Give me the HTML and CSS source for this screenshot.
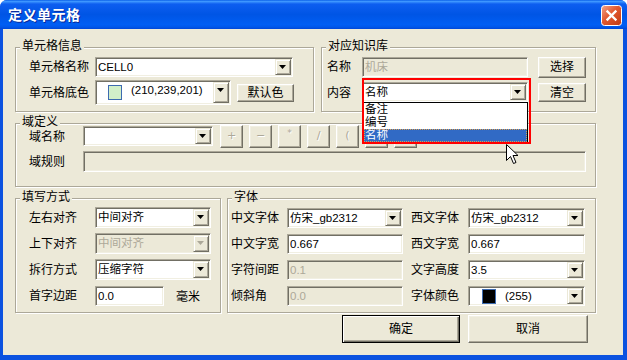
FILE: index.html
```html
<!DOCTYPE html>
<html lang="zh-CN">
<head>
<meta charset="utf-8">
<title>定义单元格</title>
<link rel="stylesheet" href="styles.css">
</head>
<body>
<div class="window">
  <div class="titlebar">
    <span class="title">定义单元格</span>
    <span class="close">
      <svg width="21" height="21" viewBox="0 0 21 21">
        <defs>
          <linearGradient id="closeGrad" x1="0" y1="0" x2="1" y2="1">
            <stop offset="0" stop-color="#F2A68C"/>
            <stop offset="0.45" stop-color="#E2582F"/>
            <stop offset="1" stop-color="#C23A12"/>
          </linearGradient>
        </defs>
        <rect x="0.5" y="0.5" width="20" height="20" rx="3" fill="url(#closeGrad)" stroke="#fff"/>
        <path d="M6.5 6.5 L14.5 14.5 M14.5 6.5 L6.5 14.5" stroke="#fff" stroke-width="2.4" stroke-linecap="square"/>
      </svg>
    </span>
  </div>

  <div class="client">
    <div class="row">
      <div class="group g-cell">
        <span class="legend">单元格信息</span>
        <div class="line">
          <span class="lbl">单元格名称</span>
          <div class="combo cell-name"><span class="val">CELL0</span><span class="arrow"></span></div>
        </div>
        <div class="line tall">
          <span class="lbl">单元格底色</span>
          <div class="combo cell-color"><span class="swatch" style="background:rgb(210,239,201)"></span><span class="val">(210,239,201)</span><span class="arrow"></span></div>
          <button class="btn btn-defcolor">默认色</button>
        </div>
      </div>

      <div class="group g-kb">
        <span class="legend">对应知识库</span>
        <div class="line">
          <span class="lbl">名称</span>
          <div class="field off kb-field">机床</div>
          <button class="btn btn-kb btn-pick">选择</button>
        </div>
        <div class="line tall">
          <span class="lbl">内容</span>
          <div class="combo-wrap">
            <div class="combo kb-field"><span class="val">名称</span><span class="arrow"></span></div>
            <div class="droplist">
              <div class="opt">备注</div>
              <div class="opt">编号</div>
              <div class="opt sel">名称</div>
            </div>
            <div class="dropframe"></div>
          </div>
          <button class="btn btn-kb btn-clear">清空</button>
        </div>
      </div>
    </div>

    <div class="group g-domain">
      <span class="legend">域定义</span>
      <div class="line dom-line">
        <span class="lbl">域名称</span>
        <div class="combo dom-name"><span class="val"></span><span class="arrow"></span></div>
        <div class="ops">
          <button class="btn op">+</button>
          <button class="btn op">−</button>
          <button class="btn op op-star">*</button>
          <button class="btn op">/</button>
          <button class="btn op">(</button>
          <button class="btn op"></button>
          <button class="btn op"></button>
        </div>
      </div>
      <div class="line dom-rule">
        <span class="lbl">域规则</span>
        <div class="field off rule-field"></div>
      </div>
    </div>

    <div class="row row-bottom">
      <div class="group g-fill">
        <span class="legend">填写方式</span>
        <div class="line">
          <span class="lbl">左右对齐</span>
          <div class="combo fill-combo"><span class="val">中间对齐</span><span class="arrow"></span></div>
        </div>
        <div class="line">
          <span class="lbl">上下对齐</span>
          <div class="combo off fill-combo"><span class="val">中间对齐</span><span class="arrow"></span></div>
        </div>
        <div class="line">
          <span class="lbl">拆行方式</span>
          <div class="combo fill-combo"><span class="val">压缩字符</span><span class="arrow"></span></div>
        </div>
        <div class="line last">
          <span class="lbl">首字边距</span>
          <div class="field margin-field">0.0</div>
          <span class="unit">毫米</span>
        </div>
      </div>

      <div class="group g-font">
        <span class="legend">字体</span>
        <div class="line">
          <span class="lbl">中文字体</span>
          <div class="combo font-l"><span class="val">仿宋_gb2312</span><span class="arrow"></span></div>
          <span class="lbl lbl-r">西文字体</span>
          <div class="combo font-r"><span class="val">仿宋_gb2312</span><span class="arrow"></span></div>
        </div>
        <div class="line">
          <span class="lbl">中文字宽</span>
          <div class="field font-l">0.667</div>
          <span class="lbl lbl-r">西文字宽</span>
          <div class="field font-r">0.667</div>
        </div>
        <div class="line">
          <span class="lbl">字符间距</span>
          <div class="field off font-l">0.1</div>
          <span class="lbl lbl-r">文字高度</span>
          <div class="combo font-r"><span class="val">3.5</span><span class="arrow"></span></div>
        </div>
        <div class="line">
          <span class="lbl">倾斜角</span>
          <div class="field off font-l">0.0</div>
          <span class="lbl lbl-r">字体颜色</span>
          <div class="combo font-r"><span class="swatch swatch-font" style="background:#000"></span><span class="val">(255)</span><span class="arrow"></span></div>
        </div>
      </div>
    </div>

    <div class="actions">
      <button class="btn btn-main default">确定</button>
      <button class="btn btn-main">取消</button>
    </div>
  </div>

  <svg class="cursor" width="13" height="21" viewBox="0 0 13 21">
    <path d="M0.5 0.5 L0.5 16.5 L4.5 12.5 L7.5 19.5 L10 18.5 L7 11.5 L12 11.5 Z" fill="#fff" stroke="#000" stroke-linejoin="miter"/>
  </svg>
</div>
</body>
</html>
```

FILE: styles.css
```css
* {
  box-sizing: border-box;
}
body {
  margin: 0;
  background: #fff;
}
.window {
  position: relative;
  width: 627px;
  height: 360px;
  display: flex;
  flex-direction: column;
  background: #0B52E0;
  border-radius: 7px 7px 0 0;
  overflow: hidden;
  font-family: "Liberation Sans", "Noto Sans CJK SC", sans-serif;
  font-size: 12px;
  color: #000;
}

/* title bar */
.titlebar {
  flex: none;
  height: 29px;
  display: flex;
  align-items: center;
  justify-content: space-between;
  padding: 0 5px 0 8px;
  background: linear-gradient(#0A5FE8 0%, #3E97FF 5%, #0D5EF0 14%, #0055E5 50%, #005EF4 85%, #0057EA 93%, #0047D8 100%);
}
.title {
  color: #fff;
  font-weight: bold;
  font-size: 14px;
  line-height: 16px;
  letter-spacing: 0.5px;
  text-shadow: 1px 1px #0A2A9A;
  margin-top: 1px;
}
.close {
  width: 21px;
  height: 21px;
  margin-top: 2px;
}
.close svg {
  display: block;
}

/* client area */
.client {
  flex: 1;
  margin: 0 4px 5px 3px;
  background: #ECE9D8;
  padding: 18px 0 0 12px;
  display: flex;
  flex-direction: column;
}
.row {
  display: flex;
  gap: 7px;
}
.row-bottom {
  gap: 6px;
  margin-top: 11px;
}

.group {
  position: relative;
  border: 1px solid #ACA899;
  box-shadow: inset 1px 1px #fff, 1px 1px #fff;
}
.legend {
  position: absolute;
  top: -8px;
  left: 4px;
  padding: 0 2px;
  line-height: 13px;
  background: #ECE9D8;
}

.line {
  display: flex;
  align-items: center;
  height: 20px;
}
.lbl {
  flex: none;
  line-height: 14px;
  white-space: nowrap;
}

/* combo boxes and text fields */
.combo,
.field {
  flex: none;
  height: 20px;
  background: #fff;
  border: 1px solid;
  border-color: #ACA899 #fff #fff #ACA899;
  box-shadow: inset 1px 1px #716F64, inset -1px -1px #F1EFE2;
}
.combo {
  display: flex;
  align-items: stretch;
  padding: 1px;
}
.val,
.field {
  font-size: 11.5px;
  line-height: 16px;
  white-space: nowrap;
}
.val {
  flex: 1;
  padding-left: 1px;
  overflow: hidden;
}
.field {
  padding: 1px 2px;
}
.combo.off,
.field.off {
  background: #ECE9D8;
  color: #ACA899;
}
.arrow {
  flex: none;
  width: 16px;
  position: relative;
  background: #ECE9D8;
  border: 1px solid;
  border-color: #ECE9D8 #716F64 #716F64 #ECE9D8;
  box-shadow: inset 1px 1px #fff, inset -1px -1px #ACA899;
}
.arrow::after {
  content: "";
  position: absolute;
  left: 3px;
  top: 5px;
  width: 7px;
  height: 4px;
  background: #000;
  clip-path: polygon(0 0, 100% 0, 50% 100%);
}
.combo.off .arrow::after {
  background: #ACA899;
}
.swatch {
  flex: none;
  width: 14px;
  height: 15px;
  align-self: center;
  margin: 0 8px 0 11px;
  border: 1px solid #3D6BB0;
}

/* buttons */
.btn {
  flex: none;
  font: inherit;
  line-height: 14px;
  color: #000;
  padding: 0;
  background: #ECE9D8;
  border: 1px solid;
  border-color: #fff #716F64 #716F64 #fff;
  box-shadow: inset -1px -1px #ACA899, inset 1px 1px #F1EFE2;
}
.btn.default {
  border-color: #000;
  box-shadow: inset 1px 1px #fff, inset -1px -1px #716F64, inset -2px -2px #ACA899;
}

/* cell info group */
.g-cell {
  width: 299px;
  height: 65px;
  padding: 9px 0 0 13px;
}
.g-cell .lbl {
  width: 66px;
}
.cell-name {
  width: 198px;
}
.line.tall {
  height: 25px;
  margin-top: 3px;
}
.cell-color {
  width: 136px;
  height: 25px;
}
.btn-defcolor {
  width: 57px;
  height: 18px;
  margin-left: 6px;
}

/* knowledge base group */
.g-kb {
  width: 275px;
  height: 65px;
  padding: 9px 0 0 5px;
}
.g-kb .lbl {
  width: 35px;
}
.kb-field {
  width: 166px;
}
.btn-kb {
  width: 48px;
  margin-left: 10px;
}
.btn-pick {
  height: 21px;
}
.btn-clear {
  height: 19px;
}
.combo-wrap {
  position: relative;
  align-self: flex-start;
  margin-top: 2px;
}
.droplist {
  position: absolute;
  left: 1px;
  top: 20px;
  width: 165px;
  height: 41px;
  background: #fff;
  border: 1px solid #000;
  z-index: 4;
}
.opt {
  height: 13px;
  line-height: 13px;
  padding-left: 1px;
  font-size: 11.5px;
  overflow: hidden;
}
.opt.sel {
  background: #316AC5;
  color: #fff;
  outline: 1px dotted #D9A050;
  outline-offset: -1px;
}
.dropframe {
  position: absolute;
  left: 0;
  top: -4px;
  width: 169px;
  height: 66px;
  border: 2px solid #FF0000;
  z-index: 5;
}

/* domain group */
.g-domain {
  width: 581px;
  height: 64px;
  margin-top: 11px;
  padding: 0 0 0 13px;
}
.g-domain .lbl {
  width: 54px;
}
.dom-line {
  height: 24px;
}
.dom-line .lbl {
  margin-top: 2px;
}
.dom-name {
  width: 130px;
}
.ops {
  display: flex;
  gap: 6px;
  margin-left: 7px;
}
.op {
  width: 23px;
  height: 23px;
  font-family: "DejaVu Sans", sans-serif;
  font-size: 11px;
  color: #ACA899;
  text-shadow: 1px 1px #fff;
}
.op-star {
  font-size: 9px;
  line-height: 9px;
  padding-bottom: 6px;
}
.dom-rule {
  height: 21px;
  margin-top: 3px;
}
.rule-field {
  width: 503px;
  height: 21px;
}

/* fill mode group */
.g-fill {
  width: 206px;
  height: 115px;
  padding: 8px 0 0 13px;
}
.g-fill .line {
  height: 21px;
  margin-bottom: 5px;
}
.g-fill .line.last {
  margin-top: 2px;
}
.g-fill .lbl {
  width: 66px;
}
.fill-combo {
  width: 116px;
  height: 21px;
}
.margin-field {
  width: 69px;
}
.unit {
  margin-left: 12px;
}

/* font group */
.g-font {
  width: 369px;
  height: 115px;
  padding: 9px 0 0 3px;
}
.g-font .line {
  margin-bottom: 6px;
}
.g-font .lbl {
  width: 56px;
}
.g-font .lbl-r {
  width: 57px;
  margin-left: 8px;
}
.font-l {
  width: 116px;
}
.font-r {
  width: 117px;
}
.swatch-font {
  margin: 0 8px 0 12px;
}

/* dialog buttons */
.actions {
  display: flex;
  justify-content: flex-end;
  gap: 8px;
  margin-top: 2px;
  padding-right: 35px;
}
.btn-main {
  width: 118px;
  height: 28px;
}
.btn-main + .btn-main {
  width: 120px;
}

.cursor {
  position: absolute;
  left: 506px;
  top: 144px;
  z-index: 6;
}
```
